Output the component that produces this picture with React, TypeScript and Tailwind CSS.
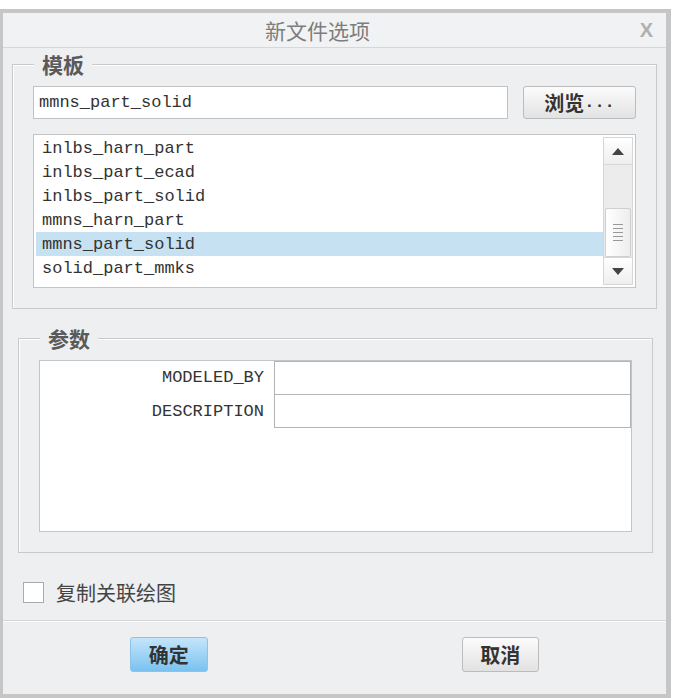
import React from "react";

const cjk = "font-['Noto_Sans_CJK_SC',sans-serif]";
const mono = "font-['Liberation_Mono','Noto_Sans_CJK_SC',monospace]";

const templates = [
  "inlbs_harn_part",
  "inlbs_part_ecad",
  "inlbs_part_solid",
  "mmns_harn_part",
  "mmns_part_solid",
  "solid_part_mmks",
];

const ScrollBar = () => {
  return (
    <div className="my-[2px] mr-[2px] flex w-[30px] flex-col border border-[#d6d6d6] bg-[#ececec]">
      <div className="flex h-[27px] items-center justify-center border-b border-[#d6d6d6] bg-gradient-to-b from-white to-[#eeeeee]">
        <svg width="12" height="7" viewBox="0 0 12 7">
          <polygon points="6,0 12,7 0,7" fill="#444" />
        </svg>
      </div>
      <div className="flex-1 px-[1px] pt-[43px]">
        <div className="flex h-[49px] items-center justify-center rounded-[2px] border border-[#cfcfcf] bg-gradient-to-r from-white to-[#ededed]">
          <svg width="10" height="19" viewBox="0 0 10 19">
            <g stroke="#9a9a9a" strokeWidth="1">
              <line x1="0" y1="1.5" x2="10" y2="1.5" />
              <line x1="0" y1="5.5" x2="10" y2="5.5" />
              <line x1="0" y1="9.5" x2="10" y2="9.5" />
              <line x1="0" y1="13.5" x2="10" y2="13.5" />
              <line x1="0" y1="17.5" x2="10" y2="17.5" />
            </g>
          </svg>
        </div>
      </div>
      <div className="flex h-[27px] items-center justify-center border-t border-[#d6d6d6] bg-gradient-to-b from-white to-[#eeeeee]">
        <svg width="12" height="7" viewBox="0 0 12 7">
          <polygon points="0,0 12,0 6,7" fill="#444" />
        </svg>
      </div>
    </div>
  );
};

const App = () => {
  return (
    <div className="h-[698px] w-[677px] bg-white pt-[9px]">
      <div className="flex h-[689px] w-[671px] flex-col border-t-4 border-b-4 border-l-[3px] border-r-[5px] border-[#c6c6c6] bg-[#eeeff1]">
        {/* title bar */}
        <div className="flex h-[35px] items-center border-b border-[#d7d7d7] bg-[#f1f2f3]">
          <span className={`ml-[262px] text-[21px] leading-[24px] text-[#7d7d7d] ${cjk}`}>
            新文件选项
          </span>
          <span className="ml-auto mr-[13px] font-['Liberation_Sans',sans-serif] text-[20px] font-bold leading-[20px] text-[#b0b0b0]">
            X
          </span>
        </div>

        {/* 模板 */}
        <fieldset className="ml-[9px] mt-[6px] w-[645px] border border-[#c9c9c9] px-[20px] pb-[20px] pt-[12px] shadow-[inset_1px_1px_0_#fff]">
          <legend className={`ml-[1px] bg-[#eeeff1] px-[8px] text-[21px] font-bold leading-[20px] text-[#5a5a5a] ${cjk}`}>
            模板
          </legend>
          <div className="flex gap-[15px]">
            <div className={`flex h-[33px] w-[475px] items-center border border-[#c2c2c2] bg-white pl-[5px] text-[17px] text-[#333] ${mono}`}>
              mmns_part_solid
            </div>
            <button
              type="button"
              className="flex h-[33px] w-[113px] items-center justify-center rounded-[3px] border border-[#bcbcbc] bg-gradient-to-b from-[#fcfcfc] to-[#e2e2e2] text-[#333]"
            >
              <span className={`text-[20px] font-bold leading-[22px] ${cjk}`}>浏览</span>
              <span className={`text-[17px] font-bold ${mono}`}>...</span>
            </button>
          </div>
          <div className="mt-[15px] flex h-[154px] border border-[#c4c4c4] bg-white">
            <div className="ml-[2px] flex-1 pt-[1px]">
              {templates.map((t) => (
                <div
                  key={t}
                  className={`h-[24px] pl-[6px] text-[17px] leading-[26px] text-[#333] ${mono} ${
                    t === "mmns_part_solid" ? "bg-[#c5e1f2]" : ""
                  }`}
                >
                  {t}
                </div>
              ))}
            </div>
            <ScrollBar />
          </div>
        </fieldset>

        {/* 参数 */}
        <fieldset className="ml-[15px] mt-[19px] w-[635px] border border-[#c9c9c9] px-[20px] pb-[20px] pt-[12px] shadow-[inset_1px_1px_0_#fff]">
          <legend className={`ml-[1px] bg-[#eeeff1] px-[8px] text-[21px] font-bold leading-[20px] text-[#5a5a5a] ${cjk}`}>
            参数
          </legend>
          <div className="h-[172px] border border-[#c5c5c5] bg-white">
            <div className="flex h-[34px]">
              <div className={`flex w-[225px] items-center justify-end pr-[1px] text-[17px] text-[#333] ${mono}`}>
                MODELED_BY
              </div>
              <div className="ml-[9px] flex-1 border border-[#b4b4b4] bg-white" />
            </div>
            <div className="flex h-[33px]">
              <div className={`flex w-[225px] items-center justify-end pr-[1px] text-[17px] text-[#333] ${mono}`}>
                DESCRIPTION
              </div>
              <div className="ml-[9px] flex-1 border border-t-0 border-[#b4b4b4] bg-white" />
            </div>
          </div>
        </fieldset>

        {/* checkbox */}
        <div className="ml-[20px] mt-[29px] flex h-[21px] items-center gap-[12px]">
          <div className="h-[21px] w-[21px] border border-[#ababab] bg-white" />
          <span className={`text-[20px] leading-[22px] text-[#444] ${cjk}`}>复制关联绘图</span>
        </div>

        {/* buttons */}
        <div className="mt-[17px] grid flex-1 grid-cols-2 justify-items-center border-t border-[#d5d5d5] pt-[16px] shadow-[inset_0_1px_0_#fff]">
          <button
            type="button"
            className="flex h-[35px] w-[78px] items-center justify-center rounded-[3px] border border-[#8fc3e6] bg-gradient-to-b from-[#c4e5fb] to-[#78c2f0] text-[#333]"
          >
            <span className={`text-[20px] font-bold leading-[22px] ${cjk}`}>确定</span>
          </button>
          <button
            type="button"
            className="flex h-[35px] w-[77px] items-center justify-center rounded-[3px] border border-[#bcbcbc] bg-gradient-to-b from-[#fcfcfc] to-[#e2e2e2] text-[#333]"
          >
            <span className={`text-[20px] font-bold leading-[22px] ${cjk}`}>取消</span>
          </button>
        </div>
      </div>
    </div>
  );
};

export default App;
